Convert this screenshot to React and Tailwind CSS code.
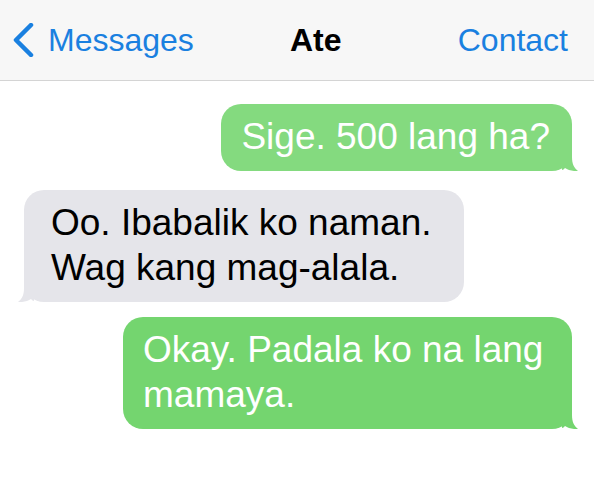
import React from "react";

// iOS 7 style message thread
const messages = [
  { id: 1, from: "me", lines: ["Sige. 500 lang ha?"], tone: "light" },
  { id: 2, from: "them", lines: ["Oo. Ibabalik ko naman.", "Wag kang mag-alala."] },
  { id: 3, from: "me", lines: ["Okay. Padala ko na lang", "mamaya."], tone: "dark" },
];

function Tail({ side, color }) {
  return (
    <svg
      width="16"
      height="20"
      viewBox="0 0 16 20"
      className={
        side === "right"
          ? "absolute -right-[6px] bottom-0"
          : "absolute -left-[6px] bottom-0 -scale-x-100"
      }
    >
      <path
        d="M0 0 H10 V6 C10 13 12 17 16 20 C11 20.5 6 19 3 17 C2 18 1 19 0 19 Z"
        fill={color}
      />
    </svg>
  );
}

function Bubble({ msg }) {
  const mine = msg.from === "me";
  const color = mine ? (msg.tone === "light" ? "#84da7f" : "#74d56f") : "#e5e5ea";
  return (
    <div
      className={`relative rounded-[20px] pt-[10px] pb-[12px] text-[37px] leading-[45px] ${
        mine ? "text-white pl-[20px] pr-[22px]" : "text-black pl-[27px] pr-[22px]"
      }`}
      style={{ backgroundColor: color }}
    >
      {msg.lines.map((l, i) => (
        <div key={i} className="whitespace-nowrap">
          {l}
        </div>
      ))}
      <Tail side={mine ? "right" : "left"} color={color} />
    </div>
  );
}

export default function App() {
  return (
    <div className="w-[594px] h-[492px] bg-white overflow-hidden font-['Liberation_Sans',Arial,sans-serif]">
      {/* Nav bar */}
      <header className="h-[81px] bg-[#f7f7f7] border-b border-[#d4d4d4] flex items-center pl-[12px] pr-[26px] text-[32px]">
        <div className="flex items-center gap-[14px] text-[#1a80e0] w-[278px]">
          <svg width="22" height="34" viewBox="0 0 22 34">
            <path
              d="M19 2 L4 17 L19 32"
              fill="none"
              stroke="#1a80e0"
              strokeWidth="4.5"
              strokeLinecap="round"
              strokeLinejoin="round"
            />
          </svg>
          <span>Messages</span>
        </div>
        <span className="font-bold text-black">Ate</span>
        <span className="flex-1 text-[#1a80e0] text-right">Contact</span>
      </header>

      {/* Thread */}
      <main className="flex flex-col pt-[23px]">
        <div className="self-end mr-[22px]">
          <Bubble msg={messages[0]} />
        </div>
        <div className="self-start ml-[24px] mt-[19px] w-[440px]">
          <Bubble msg={messages[1]} />
        </div>
        <div className="self-end mr-[22px] mt-[15px] w-[449px]">
          <Bubble msg={messages[2]} />
        </div>
      </main>
    </div>
  );
}
